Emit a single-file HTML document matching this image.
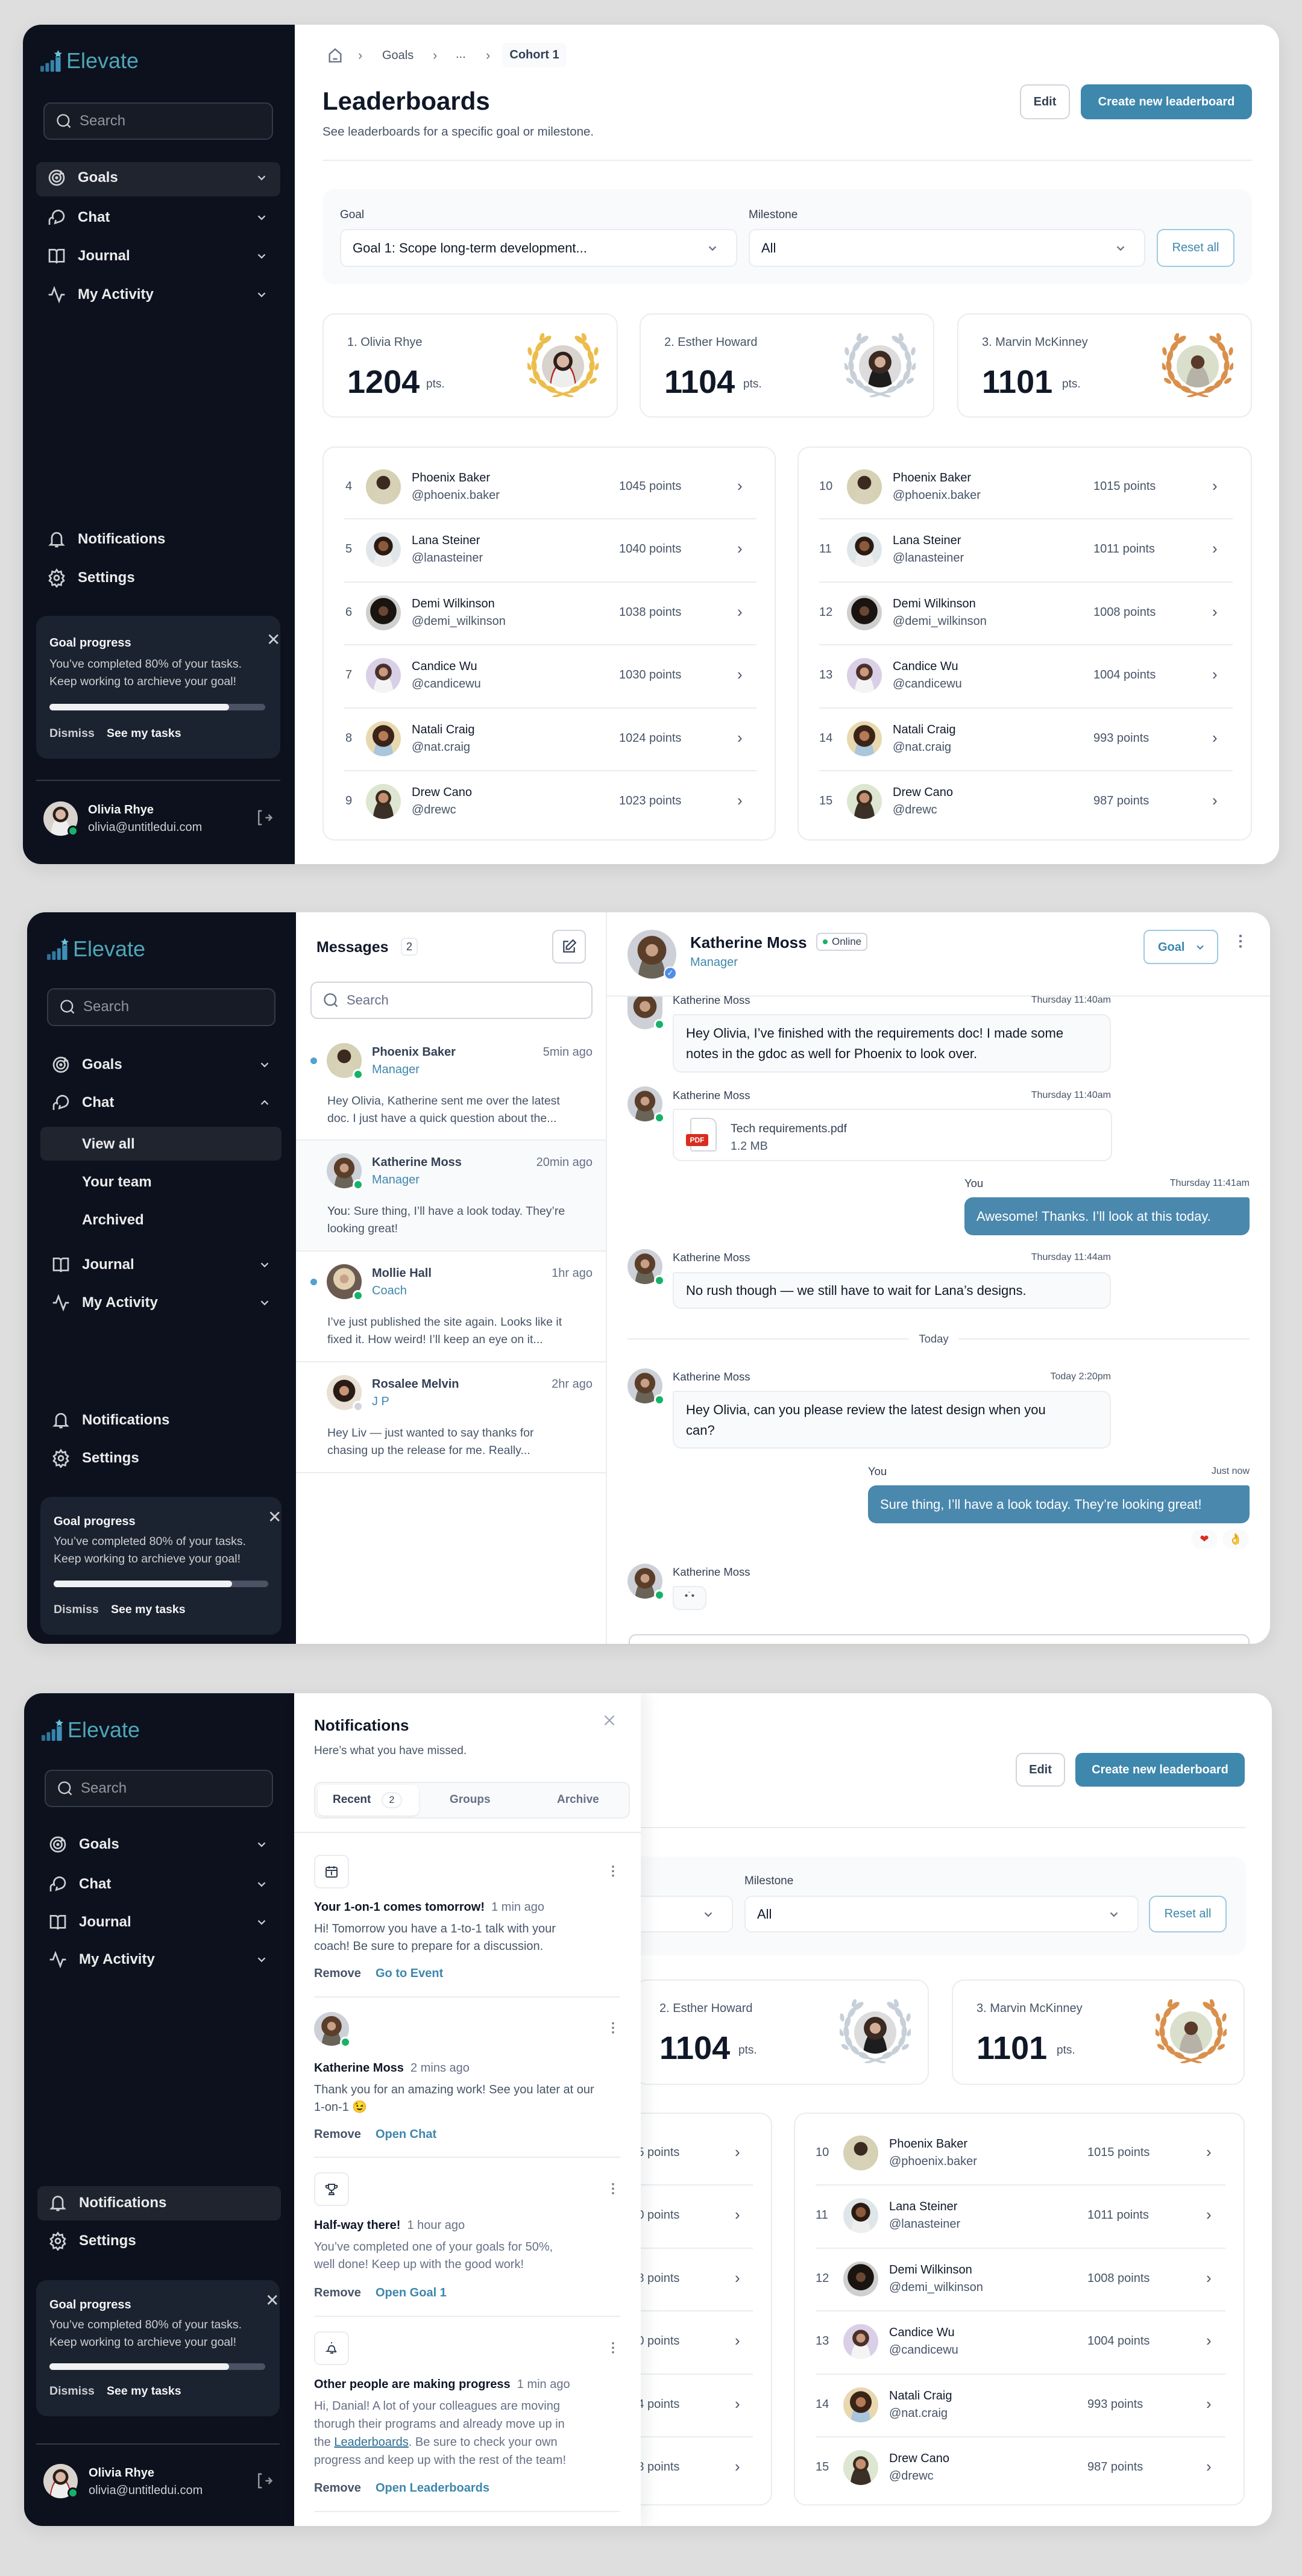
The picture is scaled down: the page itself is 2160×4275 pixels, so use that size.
<!DOCTYPE html>
<html><head><meta charset="utf-8">
<style>
*{box-sizing:border-box;margin:0;padding:0}
html,body{width:2160px;height:4275px;overflow:hidden}
body{background:#dedede;font-family:"Liberation Sans",sans-serif;color:#101828;position:relative}
.a{position:absolute}
.l{position:absolute;height:40px;line-height:40px;white-space:nowrap}
.p{position:absolute;background:#fff;border-radius:30px;overflow:hidden;box-shadow:0 8px 30px rgba(0,0,0,.08)}
.sb{position:absolute;left:0;top:0;bottom:0;background:#0c111d}
.nav{color:#ececed;font-size:24px;font-weight:700}
.ic{position:absolute;width:32px;height:32px}
.chev{position:absolute;width:22px;height:22px}
.srch{position:absolute;border:2px solid #333b4a;background:#161b26;border-radius:12px}
.srch span{position:absolute;left:58px;top:0;line-height:58px;font-size:24px;color:#94969c}
.gcard{position:absolute;background:#1b2230;border-radius:18px;width:405px}
.wbox{position:absolute;background:#fff;border:2px solid #eaecf0;border-radius:20px}
.btn{position:absolute;border-radius:12px;font-size:20px;font-weight:700;text-align:center}
.av{position:absolute;border-radius:50%;overflow:hidden}
.dot{position:absolute;width:18px;height:18px;border-radius:50%;background:#17b26a;border:3px solid #fff}
.g{color:#475467}
.lg{color:#667085}
.blue{color:#3e87ad}
.sep{position:absolute;height:2px;background:#eaecf0}
.bub{font-size:22px !important}
.nt{font-size:20px !important}
</style></head><body>
<svg width="0" height="0" style="position:absolute">
<defs>
<g id="half">
<ellipse cx="31" cy="11" rx="4.5" ry="10" transform="rotate(235 31 11)"/>
<ellipse cx="20" cy="22" rx="4.5" ry="10" transform="rotate(215 20 22)"/>
<ellipse cx="13" cy="38" rx="4.5" ry="10" transform="rotate(195 13 38)"/>
<ellipse cx="11" cy="54" rx="4.5" ry="10" transform="rotate(175 11 54)"/>
<ellipse cx="15" cy="70" rx="4.5" ry="10" transform="rotate(155 15 70)"/>
<ellipse cx="25" cy="84" rx="4.5" ry="10" transform="rotate(135 25 84)"/>
<ellipse cx="39" cy="93" rx="4.5" ry="10" transform="rotate(115 39 93)"/>
<ellipse cx="24" cy="6" rx="3.5" ry="7" transform="rotate(200 24 6)"/>
<ellipse cx="4" cy="30" rx="3.5" ry="7" transform="rotate(170 4 30)"/>
<ellipse cx="2" cy="55" rx="3.5" ry="7" transform="rotate(150 2 55)"/>
<ellipse cx="9" cy="79" rx="3.5" ry="7" transform="rotate(125 9 79)"/>
<path d="M40 95 L76 106" stroke-width="4" stroke="currentColor"/>
</g>
<g id="wreath"><use href="#half"/><use href="#half" transform="translate(118 0) scale(-1 1)"/></g>
<g id="logo"><rect x="0" y="22" width="5" height="8" rx="1" fill="#2f6f93"/><rect x="7" y="18" width="5" height="12" rx="1" fill="#2f7aa0"/><rect x="14" y="14" width="5" height="16" rx="1" fill="#3584ad"/><rect x="21" y="10" width="7" height="20" rx="1" fill="#3e8fba"/><path d="M24.5 0 L26.3 3.6 L30 4 L27.2 6.5 L28 10 L24.5 8.2 L21 10 L21.8 6.5 L19 4 L22.7 3.6Z" fill="#6cc4d8"/></g>
</defs></svg>

<!-- ================= PANEL 1 ================= -->
<div class="p" style="left:38px;top:41px;width:2084px;height:1393px">
 <div class="sb" style="width:451px">
  <svg class="a" style="left:29px;top:42px" width="36" height="36" viewBox="0 0 30 30"><use href="#logo"/></svg>
  <div class="l" style="left:72px;top:40px;font-size:36px;color:#4ea6b8">Elevate</div>
  <div class="srch" style="left:34px;top:129px;width:381px;height:62px"><svg class="a" style="left:18px;top:15px" width="28" height="28" viewBox="0 0 24 24" fill="none" stroke="#cecfd2" stroke-width="2"><circle cx="11" cy="11" r="8"/><path d="M21 21l-4.3-4.3"/></svg><span>Search</span></div>
  <div class="a" style="left:22px;top:228px;width:405px;height:57px;background:#1f242f;border-radius:10px"></div>
  <svg class="ic" style="left:40px;top:238px" viewBox="0 0 24 24" fill="none" stroke="#cecfd2" stroke-width="2"><circle cx="12" cy="12" r="9"/><circle cx="12" cy="12" r="5"/><circle cx="12" cy="12" r="1"/><path d="M15 9l4-4M17 3v4h4"/></svg>
  <div class="l nav" style="left:91px;top:234px">Goals</div>
  <svg class="ic" style="left:40px;top:304px" viewBox="0 0 24 24" fill="none" stroke="#cecfd2" stroke-width="2"><path d="M8 14a7 7 0 1 1 8 3l-6 2 1-4"/><path d="M3 21v-5a4 4 0 0 1 5-4"/></svg>
  <div class="l nav" style="left:91px;top:300px">Chat</div>
  <svg class="ic" style="left:40px;top:368px" viewBox="0 0 24 24" fill="none" stroke="#cecfd2" stroke-width="2"><path d="M3 4h6a3 3 0 0 1 3 3v14a2 2 0 0 0-2-2H3zM21 4h-6a3 3 0 0 0-3 3v14a2 2 0 0 1 2-2h7z"/></svg>
  <div class="l nav" style="left:91px;top:364px">Journal</div>
  <svg class="ic" style="left:40px;top:432px" viewBox="0 0 24 24" fill="none" stroke="#cecfd2" stroke-width="2"><path d="M2 12h4l3-8 6 16 3-8h4"/></svg>
  <div class="l nav" style="left:91px;top:428px">My Activity</div>
  <svg class="chev" style="left:385px;top:243px" viewBox="0 0 24 24" fill="none" stroke="#cecfd2" stroke-width="2.5"><path d="M6 9l6 6 6-6"/></svg>
  <svg class="chev" style="left:385px;top:309px" viewBox="0 0 24 24" fill="none" stroke="#cecfd2" stroke-width="2.5"><path d="M6 9l6 6 6-6"/></svg>
  <svg class="chev" style="left:385px;top:373px" viewBox="0 0 24 24" fill="none" stroke="#cecfd2" stroke-width="2.5"><path d="M6 9l6 6 6-6"/></svg>
  <svg class="chev" style="left:385px;top:437px" viewBox="0 0 24 24" fill="none" stroke="#cecfd2" stroke-width="2.5"><path d="M6 9l6 6 6-6"/></svg>
  <svg class="ic" style="left:40px;top:838px" viewBox="0 0 24 24" fill="none" stroke="#cecfd2" stroke-width="2"><path d="M6 17V10a6 6 0 0 1 12 0v7l2 2H4z"/><path d="M10 21h4"/></svg>
  <div class="l nav" style="left:91px;top:834px">Notifications</div>
  <svg class="ic" style="left:40px;top:902px" viewBox="0 0 24 24" fill="none" stroke="#cecfd2" stroke-width="2"><circle cx="12" cy="12" r="3"/><path d="M12 2l2 3 3.5-1 .5 3.5 3 2-2 3 2 3-3 2-.5 3.5-3.5-1-2 3-2-3-3.5 1-.5-3.5-3-2 2-3-2-3 3-2 .5-3.5 3.5 1z"/></svg>
  <div class="l nav" style="left:91px;top:898px">Settings</div>
  <div class="gcard" style="left:22px;top:981px;height:237px">
   <div class="l" style="left:22px;top:25px;font-size:20px;font-weight:700;color:#f5f5f6">Goal progress</div>
   <div class="l" style="left:382px;top:20px;font-size:28px;color:#cecfd2">✕</div>
   <div class="a" style="left:22px;top:66px;font-size:19.5px;line-height:29px;color:#cecfd2">You’ve completed 80% of your tasks.<br>Keep working to archieve your goal!</div>
   <div class="a" style="left:22px;top:146px;width:358px;height:11px;border-radius:6px;background:#4a5263"></div>
   <div class="a" style="left:22px;top:146px;width:298px;height:11px;border-radius:6px;background:#f0f1f3"></div>
   <div class="l" style="left:22px;top:175px;font-size:19.5px;font-weight:700;color:#cecfd2">Dismiss</div>
   <div class="l" style="left:117px;top:175px;font-size:19.5px;font-weight:700;color:#f5f5f6">See my tasks</div>
  </div>
  <div class="a" style="left:22px;top:1253px;width:405px;height:2px;background:#333a47"></div>
  <div class="av" style="left:34px;top:1289px;width:57px;height:57px;background:radial-gradient(circle at 50% 38%,#d9b7a2 0 18%,#2b1f1a 19% 28%,transparent 29%),radial-gradient(ellipse at 50% 105%,#eee 0 40%,transparent 41%),#d8d3cc"></div>
  <div class="dot" style="left:74px;top:1329px;border-color:#0c111d"></div>
  <div class="l" style="left:108px;top:1283px;font-size:20px;font-weight:700;color:#f5f5f6">Olivia Rhye</div>
  <div class="l" style="left:108px;top:1312px;font-size:20px;color:#cecfd2">olivia@untitledui.com</div>
  <svg class="a" style="left:385px;top:1301px" width="30" height="30" viewBox="0 0 24 24" fill="none" stroke="#94969c" stroke-width="2"><path d="M9 3H5v18h4M14 12h8M18 8l4 4-4 4"/></svg>
 </div>

 <!-- main -->
 <svg class="a" style="left:504px;top:37px" width="28" height="28" viewBox="0 0 24 24" fill="none" stroke="#667085" stroke-width="2"><path d="M4 10l8-7 8 7v11H4z"/><path d="M9 17h6"/></svg>
 <div class="l lg" style="left:556px;top:31px;font-size:22px">›</div>
 <div class="l g" style="left:596px;top:31px;font-size:20px">Goals</div>
 <div class="l lg" style="left:680px;top:31px;font-size:22px">›</div>
 <div class="l g" style="left:718px;top:29px;font-size:20px">...</div>
 <div class="l lg" style="left:768px;top:31px;font-size:22px">›</div>
 <div class="a" style="left:795px;top:30px;width:107px;height:41px;background:#f9fafb;border-radius:8px;font-size:20px;line-height:41px;text-align:center;color:#344054;font-weight:700">Cohort 1</div>
 <div class="l" style="left:497px;top:107px;font-size:42px;font-weight:700">Leaderboards</div>
 <div class="l g" style="left:497px;top:158px;font-size:20.5px">See leaderboards for a specific goal or milestone.</div>
 <div class="btn" style="left:1654px;top:99px;width:83px;height:58px;border:2px solid #d0d5dd;line-height:54px;color:#344054">Edit</div>
 <div class="btn" style="left:1755px;top:99px;width:284px;height:58px;background:#3e87ad;line-height:58px;color:#fff">Create new leaderboard</div>
 <div class="sep" style="left:497px;top:224px;width:1542px"></div>
 <div class="a" style="left:497px;top:273px;width:1542px;height:158px;background:#f9fafb;border-radius:20px"></div>
 <div class="l" style="left:526px;top:296px;font-size:19px;color:#344054">Goal</div>
 <div class="l" style="left:1204px;top:296px;font-size:19px;color:#344054">Milestone</div>
 <div class="wbox" style="left:526px;top:339px;width:659px;height:63px;border-radius:12px"><div class="l" style="left:19px;top:10px;font-size:22px">Goal 1: Scope long-term development...</div><svg class="chev" style="left:605px;top:19px" viewBox="0 0 24 24" fill="none" stroke="#667085" stroke-width="2.5"><path d="M6 9l6 6 6-6"/></svg></div>
 <div class="wbox" style="left:1204px;top:339px;width:658px;height:63px;border-radius:12px"><div class="l" style="left:19px;top:10px;font-size:22px">All</div><svg class="chev" style="left:604px;top:19px" viewBox="0 0 24 24" fill="none" stroke="#667085" stroke-width="2.5"><path d="M6 9l6 6 6-6"/></svg></div>
 <div class="btn" style="left:1881px;top:339px;width:129px;height:63px;border:2px solid #9ccae0;background:#fff;line-height:59px;color:#3e87ad;font-weight:400;font-size:20px">Reset all</div>

 <!-- top cards -->
 <div class="wbox" style="left:497px;top:479px;width:490px;height:173px">
  <div class="l g" style="left:39px;top:26px;font-size:20px">1. Olivia Rhye</div>
  <div class="l" style="left:39px;top:82px;font-size:54px;font-weight:700;height:60px;line-height:60px">1204</div>
  <div class="l g" style="left:170px;top:96px;font-size:19px">pts.</div>
  <svg class="a" style="left:338px;top:31px;color:#ecbd4c" width="118" height="106" viewBox="0 0 118 106" fill="#ecbd4c"><use href="#wreath"/></svg>
  <div class="av" style="left:362px;top:51px;width:70px;height:70px;background:radial-gradient(circle at 50% 38%,#d9b7a2 0 18%,#2b1f1a 19% 28%,transparent 29%),radial-gradient(ellipse at 50% 105%,#eee 0 40%,#b1221e 41% 44%,transparent 45%),#d8d3cc"></div>
 </div>
 <div class="wbox" style="left:1023px;top:479px;width:489px;height:173px">
  <div class="l g" style="left:39px;top:26px;font-size:20px">2. Esther Howard</div>
  <div class="l" style="left:39px;top:82px;font-size:54px;font-weight:700;height:60px;line-height:60px">1104</div>
  <div class="l g" style="left:170px;top:96px;font-size:19px">pts.</div>
  <svg class="a" style="left:338px;top:31px;color:#c7d0d8" width="118" height="106" viewBox="0 0 118 106" fill="#c7d0d8"><use href="#wreath"/></svg>
  <div class="av" style="left:362px;top:51px;width:70px;height:70px;background:radial-gradient(circle at 50% 40%,#d4ad96 0 16%,#3a2a22 17% 34%,transparent 35%),radial-gradient(ellipse at 50% 108%,#1d1d1d 0 40%,transparent 41%),#dcdcdc"></div>
 </div>
 <div class="wbox" style="left:1550px;top:479px;width:489px;height:173px">
  <div class="l g" style="left:39px;top:26px;font-size:20px">3. Marvin McKinney</div>
  <div class="l" style="left:39px;top:82px;font-size:54px;font-weight:700;height:60px;line-height:60px">1101</div>
  <div class="l g" style="left:172px;top:96px;font-size:19px">pts.</div>
  <svg class="a" style="left:338px;top:31px;color:#d9904c" width="118" height="106" viewBox="0 0 118 106" fill="#d9904c"><use href="#wreath"/></svg>
  <div class="av" style="left:362px;top:51px;width:70px;height:70px;background:radial-gradient(circle at 50% 40%,#5a3a2a 0 20%,transparent 21%),radial-gradient(ellipse at 50% 108%,#b6b2a8 0 40%,transparent 41%),#d9dfca"></div>
 </div>

 <!-- lists -->
 <div class="wbox" style="left:497px;top:700px;width:752px;height:654px">
  <div class="sep" style="left:34px;top:117px;width:684px"></div><div class="sep" style="left:34px;top:222px;width:684px"></div><div class="sep" style="left:34px;top:326px;width:684px"></div><div class="sep" style="left:34px;top:431px;width:684px"></div><div class="sep" style="left:34px;top:535px;width:684px"></div>
  <div class="l g" style="left:36px;top:44px;font-size:20px">4</div><div class="av" style="left:70px;top:36px;width:58px;height:58px;background:radial-gradient(circle at 50% 38%,#3b2a20 0 24%,transparent 25%),radial-gradient(ellipse at 50% 105%,#d8d2b8 0 42%,transparent 43%),#d6d0b4"></div><div class="l" style="left:146px;top:30px;font-size:20px">Phoenix Baker</div><div class="l g" style="left:146px;top:59px;font-size:20px">@phoenix.baker</div><div class="l g" style="left:490px;top:44px;font-size:20px">1045 points</div><div class="l g" style="left:686px;top:43px;font-size:26px">›</div>
  <div class="l g" style="left:36px;top:148px;font-size:20px">5</div><div class="av" style="left:70px;top:140px;width:58px;height:58px;background:radial-gradient(circle at 50% 40%,#8b5a3c 0 18%,#2a1a12 19% 34%,transparent 35%),radial-gradient(ellipse at 50% 108%,#eee 0 40%,transparent 41%),#dfe6ea"></div><div class="l" style="left:146px;top:134px;font-size:20px">Lana Steiner</div><div class="l g" style="left:146px;top:163px;font-size:20px">@lanasteiner</div><div class="l g" style="left:490px;top:148px;font-size:20px">1040 points</div><div class="l g" style="left:686px;top:147px;font-size:26px">›</div>
  <div class="l g" style="left:36px;top:253px;font-size:20px">6</div><div class="av" style="left:70px;top:245px;width:58px;height:58px;background:radial-gradient(circle at 50% 45%,#6b4634 0 18%,#1a1410 19% 50%,transparent 51%),#cfcfcf"></div><div class="l" style="left:146px;top:239px;font-size:20px">Demi Wilkinson</div><div class="l g" style="left:146px;top:268px;font-size:20px">@demi_wilkinson</div><div class="l g" style="left:490px;top:253px;font-size:20px">1038 points</div><div class="l g" style="left:686px;top:252px;font-size:26px">›</div>
  <div class="l g" style="left:36px;top:357px;font-size:20px">7</div><div class="av" style="left:70px;top:349px;width:58px;height:58px;background:radial-gradient(circle at 50% 40%,#c99a80 0 16%,#4a3028 17% 30%,transparent 31%),radial-gradient(ellipse at 50% 108%,#f4f4f4 0 40%,transparent 41%),#d9cfe6"></div><div class="l" style="left:146px;top:343px;font-size:20px">Candice Wu</div><div class="l g" style="left:146px;top:372px;font-size:20px">@candicewu</div><div class="l g" style="left:490px;top:357px;font-size:20px">1030 points</div><div class="l g" style="left:686px;top:356px;font-size:26px">›</div>
  <div class="l g" style="left:36px;top:462px;font-size:20px">8</div><div class="av" style="left:70px;top:454px;width:58px;height:58px;background:radial-gradient(circle at 50% 42%,#b57a56 0 18%,#3a2418 19% 40%,transparent 41%),radial-gradient(ellipse at 50% 108%,#a9c6dc 0 40%,transparent 41%),#e8d8b0"></div><div class="l" style="left:146px;top:448px;font-size:20px">Natali Craig</div><div class="l g" style="left:146px;top:477px;font-size:20px">@nat.craig</div><div class="l g" style="left:490px;top:462px;font-size:20px">1024 points</div><div class="l g" style="left:686px;top:461px;font-size:26px">›</div>
  <div class="l g" style="left:36px;top:566px;font-size:20px">9</div><div class="av" style="left:70px;top:558px;width:58px;height:58px;background:radial-gradient(circle at 50% 40%,#c49070 0 18%,#3a2a20 19% 28%,transparent 29%),radial-gradient(ellipse at 50% 108%,#3a3028 0 42%,transparent 43%),#dce6d0"></div><div class="l" style="left:146px;top:552px;font-size:20px">Drew Cano</div><div class="l g" style="left:146px;top:581px;font-size:20px">@drewc</div><div class="l g" style="left:490px;top:566px;font-size:20px">1023 points</div><div class="l g" style="left:686px;top:565px;font-size:26px">›</div>
 </div>
 <div class="wbox" style="left:1285px;top:700px;width:754px;height:654px">
  <div class="sep" style="left:34px;top:117px;width:686px"></div><div class="sep" style="left:34px;top:222px;width:686px"></div><div class="sep" style="left:34px;top:326px;width:686px"></div><div class="sep" style="left:34px;top:431px;width:686px"></div><div class="sep" style="left:34px;top:535px;width:686px"></div>
  <div class="l g" style="left:34px;top:44px;font-size:20px">10</div><div class="av" style="left:80px;top:36px;width:58px;height:58px;background:radial-gradient(circle at 50% 38%,#3b2a20 0 24%,transparent 25%),radial-gradient(ellipse at 50% 105%,#d8d2b8 0 42%,transparent 43%),#d6d0b4"></div><div class="l" style="left:156px;top:30px;font-size:20px">Phoenix Baker</div><div class="l g" style="left:156px;top:59px;font-size:20px">@phoenix.baker</div><div class="l g" style="left:489px;top:44px;font-size:20px">1015 points</div><div class="l g" style="left:686px;top:43px;font-size:26px">›</div>
  <div class="l g" style="left:34px;top:148px;font-size:20px">11</div><div class="av" style="left:80px;top:140px;width:58px;height:58px;background:radial-gradient(circle at 50% 40%,#8b5a3c 0 18%,#2a1a12 19% 34%,transparent 35%),radial-gradient(ellipse at 50% 108%,#eee 0 40%,transparent 41%),#dfe6ea"></div><div class="l" style="left:156px;top:134px;font-size:20px">Lana Steiner</div><div class="l g" style="left:156px;top:163px;font-size:20px">@lanasteiner</div><div class="l g" style="left:489px;top:148px;font-size:20px">1011 points</div><div class="l g" style="left:686px;top:147px;font-size:26px">›</div>
  <div class="l g" style="left:34px;top:253px;font-size:20px">12</div><div class="av" style="left:80px;top:245px;width:58px;height:58px;background:radial-gradient(circle at 50% 45%,#6b4634 0 18%,#1a1410 19% 50%,transparent 51%),#cfcfcf"></div><div class="l" style="left:156px;top:239px;font-size:20px">Demi Wilkinson</div><div class="l g" style="left:156px;top:268px;font-size:20px">@demi_wilkinson</div><div class="l g" style="left:489px;top:253px;font-size:20px">1008 points</div><div class="l g" style="left:686px;top:252px;font-size:26px">›</div>
  <div class="l g" style="left:34px;top:357px;font-size:20px">13</div><div class="av" style="left:80px;top:349px;width:58px;height:58px;background:radial-gradient(circle at 50% 40%,#c99a80 0 16%,#4a3028 17% 30%,transparent 31%),radial-gradient(ellipse at 50% 108%,#f4f4f4 0 40%,transparent 41%),#d9cfe6"></div><div class="l" style="left:156px;top:343px;font-size:20px">Candice Wu</div><div class="l g" style="left:156px;top:372px;font-size:20px">@candicewu</div><div class="l g" style="left:489px;top:357px;font-size:20px">1004 points</div><div class="l g" style="left:686px;top:356px;font-size:26px">›</div>
  <div class="l g" style="left:34px;top:462px;font-size:20px">14</div><div class="av" style="left:80px;top:454px;width:58px;height:58px;background:radial-gradient(circle at 50% 42%,#b57a56 0 18%,#3a2418 19% 40%,transparent 41%),radial-gradient(ellipse at 50% 108%,#a9c6dc 0 40%,transparent 41%),#e8d8b0"></div><div class="l" style="left:156px;top:448px;font-size:20px">Natali Craig</div><div class="l g" style="left:156px;top:477px;font-size:20px">@nat.craig</div><div class="l g" style="left:489px;top:462px;font-size:20px">993 points</div><div class="l g" style="left:686px;top:461px;font-size:26px">›</div>
  <div class="l g" style="left:34px;top:566px;font-size:20px">15</div><div class="av" style="left:80px;top:558px;width:58px;height:58px;background:radial-gradient(circle at 50% 40%,#c49070 0 18%,#3a2a20 19% 28%,transparent 29%),radial-gradient(ellipse at 50% 108%,#3a3028 0 42%,transparent 43%),#dce6d0"></div><div class="l" style="left:156px;top:552px;font-size:20px">Drew Cano</div><div class="l g" style="left:156px;top:581px;font-size:20px">@drewc</div><div class="l g" style="left:489px;top:566px;font-size:20px">987 points</div><div class="l g" style="left:686px;top:565px;font-size:26px">›</div>
 </div>
</div>

<!-- ================= PANEL 2 ================= -->
<div class="p" style="left:45px;top:1514px;width:2062px;height:1214px">
 <div class="sb" style="width:446px">
  <svg class="a" style="left:33px;top:43px" width="36" height="36" viewBox="0 0 30 30"><use href="#logo"/></svg>
  <div class="l" style="left:76px;top:41px;font-size:36px;color:#4ea6b8">Elevate</div>
  <div class="srch" style="left:33px;top:126px;width:379px;height:63px"><svg class="a" style="left:18px;top:15px" width="28" height="28" viewBox="0 0 24 24" fill="none" stroke="#cecfd2" stroke-width="2"><circle cx="11" cy="11" r="8"/><path d="M21 21l-4.3-4.3"/></svg><span>Search</span></div>
  <svg class="ic" style="left:40px;top:237px" viewBox="0 0 24 24" fill="none" stroke="#cecfd2" stroke-width="2"><circle cx="12" cy="12" r="9"/><circle cx="12" cy="12" r="5"/><circle cx="12" cy="12" r="1"/><path d="M15 9l4-4M17 3v4h4"/></svg>
  <div class="l nav" style="left:91px;top:233px">Goals</div>
  <svg class="ic" style="left:40px;top:300px" viewBox="0 0 24 24" fill="none" stroke="#cecfd2" stroke-width="2"><path d="M8 14a7 7 0 1 1 8 3l-6 2 1-4"/><path d="M3 21v-5a4 4 0 0 1 5-4"/></svg>
  <div class="l nav" style="left:91px;top:296px">Chat</div>
  <div class="a" style="left:22px;top:356px;width:400px;height:56px;background:#1f242f;border-radius:10px"></div>
  <div class="l nav" style="left:91px;top:365px">View all</div>
  <div class="l nav" style="left:91px;top:428px">Your team</div>
  <div class="l nav" style="left:91px;top:491px">Archived</div>
  <svg class="ic" style="left:40px;top:569px" viewBox="0 0 24 24" fill="none" stroke="#cecfd2" stroke-width="2"><path d="M3 4h6a3 3 0 0 1 3 3v14a2 2 0 0 0-2-2H3zM21 4h-6a3 3 0 0 0-3 3v14a2 2 0 0 1 2-2h7z"/></svg>
  <div class="l nav" style="left:91px;top:565px">Journal</div>
  <svg class="ic" style="left:40px;top:632px" viewBox="0 0 24 24" fill="none" stroke="#cecfd2" stroke-width="2"><path d="M2 12h4l3-8 6 16 3-8h4"/></svg>
  <div class="l nav" style="left:91px;top:628px">My Activity</div>
  <svg class="chev" style="left:383px;top:242px" viewBox="0 0 24 24" fill="none" stroke="#cecfd2" stroke-width="2.5"><path d="M6 9l6 6 6-6"/></svg>
  <svg class="chev" style="left:383px;top:305px" viewBox="0 0 24 24" fill="none" stroke="#cecfd2" stroke-width="2.5"><path d="M6 15l6-6 6 6"/></svg>
  <svg class="chev" style="left:383px;top:574px" viewBox="0 0 24 24" fill="none" stroke="#cecfd2" stroke-width="2.5"><path d="M6 9l6 6 6-6"/></svg>
  <svg class="chev" style="left:383px;top:637px" viewBox="0 0 24 24" fill="none" stroke="#cecfd2" stroke-width="2.5"><path d="M6 9l6 6 6-6"/></svg>
  <svg class="ic" style="left:40px;top:827px" viewBox="0 0 24 24" fill="none" stroke="#cecfd2" stroke-width="2"><path d="M6 17V10a6 6 0 0 1 12 0v7l2 2H4z"/><path d="M10 21h4"/></svg>
  <div class="l nav" style="left:91px;top:823px">Notifications</div>
  <svg class="ic" style="left:40px;top:890px" viewBox="0 0 24 24" fill="none" stroke="#cecfd2" stroke-width="2"><circle cx="12" cy="12" r="3"/><path d="M12 2l2 3 3.5-1 .5 3.5 3 2-2 3 2 3-3 2-.5 3.5-3.5-1-2 3-2-3-3.5 1-.5-3.5-3-2 2-3-2-3 3-2 .5-3.5 3.5 1z"/></svg>
  <div class="l nav" style="left:91px;top:886px">Settings</div>
  <div class="gcard" style="left:22px;top:970px;height:229px;width:400px">
   <div class="l" style="left:22px;top:21px;font-size:20px;font-weight:700;color:#f5f5f6">Goal progress</div>
   <div class="l" style="left:377px;top:14px;font-size:28px;color:#cecfd2">✕</div>
   <div class="a" style="left:22px;top:60px;font-size:19.5px;line-height:29px;color:#cecfd2">You’ve completed 80% of your tasks.<br>Keep working to archieve your goal!</div>
   <div class="a" style="left:22px;top:139px;width:356px;height:11px;border-radius:6px;background:#4a5263"></div>
   <div class="a" style="left:22px;top:139px;width:296px;height:11px;border-radius:6px;background:#f0f1f3"></div>
   <div class="l" style="left:22px;top:167px;font-size:19.5px;font-weight:700;color:#cecfd2">Dismiss</div>
   <div class="l" style="left:117px;top:167px;font-size:19.5px;font-weight:700;color:#f5f5f6">See my tasks</div>
  </div>
 </div>
 <!-- messages list -->
 <div class="a" style="left:960px;top:0;width:2px;height:1214px;background:#eaecf0"></div>
 <div class="l" style="left:480px;top:38px;font-size:25px;font-weight:700">Messages</div>
 <div class="a" style="left:620px;top:42px;width:28px;height:30px;border:2px solid #eaecf0;border-radius:7px;font-size:18px;line-height:26px;text-align:center;color:#344054">2</div>
 <div class="a" style="left:871px;top:29px;width:56px;height:56px;border:2px solid #d0d5dd;border-radius:10px"><svg class="a" style="left:13px;top:13px" width="26" height="26" viewBox="0 0 24 24" fill="none" stroke="#344054" stroke-width="2"><path d="M11 4H4v16h16v-7"/><path d="M18 2l4 4-10 10H8v-4z"/></svg></div>
 <div class="wbox" style="left:470px;top:115px;width:468px;height:62px;border-radius:12px;border-color:#d0d5dd"><svg class="a" style="left:18px;top:15px" width="28" height="28" viewBox="0 0 24 24" fill="none" stroke="#667085" stroke-width="2"><circle cx="11" cy="11" r="8"/><path d="M21 21l-4.3-4.3"/></svg><div class="l lg" style="left:58px;top:9px;font-size:22px">Search</div></div>
 <div class="a" style="left:446px;top:377px;width:514px;height:184px;background:#f9fafb"></div>
 <div class="sep" style="left:446px;top:377px;width:514px"></div><div class="sep" style="left:446px;top:561px;width:514px"></div><div class="sep" style="left:446px;top:745px;width:514px"></div><div class="sep" style="left:446px;top:929px;width:514px"></div>
 <!-- item1 -->
 <div class="a" style="left:470px;top:241px;width:11px;height:11px;border-radius:50%;background:#53a1cf"></div>
 <div class="av" style="left:497px;top:217px;width:58px;height:58px;background:radial-gradient(circle at 50% 38%,#3b2a20 0 24%,transparent 25%),radial-gradient(ellipse at 50% 105%,#d8d2b8 0 42%,transparent 43%),#d6d0b4"></div><div class="dot" style="left:540px;top:260px"></div>
 <div class="l" style="left:572px;top:212px;font-size:20px;font-weight:700;color:#344054">Phoenix Baker</div>
 <div class="l lg" style="left:820px;top:212px;width:118px;text-align:right;font-size:20px">5min ago</div>
 <div class="l blue" style="left:572px;top:241px;font-size:20px">Manager</div>
 <div class="a g" style="left:498px;top:299px;font-size:19.5px;line-height:29px">Hey Olivia, Katherine sent me over the latest<br>doc. I just have a quick question about the...</div>
 <!-- item2 -->
 <div class="av" style="left:497px;top:400px;width:58px;height:58px;background:radial-gradient(circle at 50% 42%,#c8a088 0 16%,#5a3e2a 17% 38%,transparent 39%),radial-gradient(ellipse at 50% 108%,#6a6458 0 40%,transparent 41%),#cdd0d6"></div><div class="dot" style="left:540px;top:443px"></div>
 <div class="l" style="left:572px;top:395px;font-size:20px;font-weight:700;color:#344054">Katherine Moss</div>
 <div class="l lg" style="left:820px;top:395px;width:118px;text-align:right;font-size:20px">20min ago</div>
 <div class="l blue" style="left:572px;top:424px;font-size:20px">Manager</div>
 <div class="a g" style="left:498px;top:482px;font-size:19.5px;line-height:29px"><span style="color:#344054">You:</span> Sure thing, I’ll have a look today. They’re<br>looking great!</div>
 <!-- item3 -->
 <div class="a" style="left:470px;top:608px;width:11px;height:11px;border-radius:50%;background:#53a1cf"></div>
 <div class="av" style="left:497px;top:584px;width:58px;height:58px;background:radial-gradient(circle at 50% 42%,#caa08a 0 16%,#e0d0b0 17% 40%,transparent 41%),#6a5a50"></div><div class="dot" style="left:540px;top:627px"></div>
 <div class="l" style="left:572px;top:579px;font-size:20px;font-weight:700;color:#344054">Mollie Hall</div>
 <div class="l lg" style="left:820px;top:579px;width:118px;text-align:right;font-size:20px">1hr ago</div>
 <div class="l blue" style="left:572px;top:608px;font-size:20px">Coach</div>
 <div class="a g" style="left:498px;top:666px;font-size:19.5px;line-height:29px">I’ve just published the site again. Looks like it<br>fixed it. How weird! I’ll keep an eye on it...</div>
 <!-- item4 -->
 <div class="av" style="left:497px;top:768px;width:58px;height:58px;background:radial-gradient(circle at 50% 45%,#c89478 0 18%,#2a1c14 19% 42%,transparent 43%),#e8e0d4"></div><div class="dot" style="left:540px;top:811px;background:#d0d5dd"></div>
 <div class="l" style="left:572px;top:763px;font-size:20px;font-weight:700;color:#344054">Rosalee Melvin</div>
 <div class="l lg" style="left:820px;top:763px;width:118px;text-align:right;font-size:20px">2hr ago</div>
 <div class="l blue" style="left:572px;top:792px;font-size:20px">J P</div>
 <div class="a g" style="left:498px;top:850px;font-size:19.5px;line-height:29px">Hey Liv — just wanted to say thanks for<br>chasing up the release for me. Really...</div>

 <!-- chat -->
 <div class="av" style="left:996px;top:29px;width:81px;height:81px;background:radial-gradient(circle at 50% 42%,#c8a088 0 16%,#5a3e2a 17% 38%,transparent 39%),radial-gradient(ellipse at 50% 108%,#6a6458 0 40%,transparent 41%),#cdd0d6"></div>
 <div class="a" style="left:1056px;top:90px;width:22px;height:22px;border-radius:50%;background:#4f8de8;border:2px solid #fff;color:#fff;font-size:13px;line-height:18px;text-align:center">✓</div>
 <div class="l" style="left:1100px;top:30px;font-size:26px;font-weight:700">Katherine Moss</div>
 <div class="a" style="left:1309px;top:34px;width:85px;height:30px;border:2px solid #d0d5dd;border-radius:7px;font-size:17px;line-height:26px;color:#344054;padding-left:24px">Online<span class="a" style="left:9px;top:9px;width:8px;height:8px;border-radius:50%;background:#17b26a"></span></div>
 <div class="l blue" style="left:1100px;top:63px;font-size:20px">Manager</div>
 <div class="a" style="left:1852px;top:29px;width:124px;height:57px;border:2px solid #9ccae0;border-radius:10px"><div class="l blue" style="left:22px;top:7px;font-size:20px;font-weight:700">Goal</div><svg class="a" style="left:82px;top:17px" width="20" height="20" viewBox="0 0 24 24" fill="none" stroke="#3e87ad" stroke-width="2.5"><path d="M6 9l6 6 6-6"/></svg></div>
 <div class="l lg" style="left:2006px;top:35px;font-size:26px;font-weight:700;writing-mode:vertical-lr;height:auto;line-height:16px">⋯</div>
 <div class="sep" style="left:962px;top:138px;width:1100px"></div>
 <!-- msg1 -->
 <div class="av" style="left:996px;top:140px;width:58px;height:54px;border-radius:0 0 29px 29px;background:radial-gradient(circle at 50% 30%,#c8a088 0 18%,#5a3e2a 19% 40%,transparent 41%),#cdd0d6"></div><div class="dot" style="left:1040px;top:177px"></div>
 <div class="l" style="left:1071px;top:126px;font-size:18.5px;color:#344054">Katherine Moss</div>
 <div class="l g" style="left:1600px;top:126px;width:198px;text-align:right;font-size:16px">Thursday 11:40am</div>
 <div class="a bub" style="left:1071px;top:169px;width:727px;height:97px;background:#f9fafb;border:2px solid #eaecf0;border-radius:4px 14px 14px 14px;padding:13px 20px;line-height:34px">Hey Olivia, I’ve finished with the requirements doc! I made some notes in the gdoc as well for Phoenix to look over.</div>
 <!-- msg2 -->
 <div class="av" style="left:996px;top:289px;width:58px;height:58px;background:radial-gradient(circle at 50% 42%,#c8a088 0 16%,#5a3e2a 17% 38%,transparent 39%),radial-gradient(ellipse at 50% 108%,#6a6458 0 40%,transparent 41%),#cdd0d6"></div><div class="dot" style="left:1040px;top:332px"></div>
 <div class="l" style="left:1071px;top:284px;font-size:18.5px;color:#344054">Katherine Moss</div>
 <div class="l g" style="left:1600px;top:284px;width:198px;text-align:right;font-size:16px">Thursday 11:40am</div>
 <div class="a" style="left:1071px;top:326px;width:729px;height:87px;background:#fff;border:2px solid #eaecf0;border-radius:4px 14px 14px 14px">
  <div class="a" style="left:27px;top:13px;width:44px;height:56px;border:2px solid #d0d5dd;border-radius:4px 12px 4px 4px;background:#fff"></div>
  <div class="a" style="left:20px;top:40px;width:37px;height:20px;background:#d92d20;border-radius:3px;color:#fff;font-size:12px;font-weight:700;line-height:20px;text-align:center">PDF</div>
  <div class="l" style="left:94px;top:11px;font-size:19.5px;color:#344054">Tech requirements.pdf</div>
  <div class="l g" style="left:94px;top:40px;font-size:19.5px">1.2 MB</div>
 </div>
 <!-- you1 -->
 <div class="l" style="left:1555px;top:430px;font-size:18.5px;color:#344054">You</div>
 <div class="l g" style="left:1830px;top:430px;width:198px;text-align:right;font-size:16px">Thursday 11:41am</div>
 <div class="a bub" style="left:1555px;top:473px;width:473px;height:63px;background:#4a88ad;border-radius:14px 4px 14px 14px;color:#fff;line-height:63px;padding-left:20px;white-space:nowrap">Awesome! Thanks. I’ll look at this today.</div>
 <!-- msg3 -->
 <div class="av" style="left:996px;top:559px;width:58px;height:58px;background:radial-gradient(circle at 50% 42%,#c8a088 0 16%,#5a3e2a 17% 38%,transparent 39%),radial-gradient(ellipse at 50% 108%,#6a6458 0 40%,transparent 41%),#cdd0d6"></div><div class="dot" style="left:1040px;top:602px"></div>
 <div class="l" style="left:1071px;top:553px;font-size:18.5px;color:#344054">Katherine Moss</div>
 <div class="l g" style="left:1600px;top:553px;width:198px;text-align:right;font-size:16px">Thursday 11:44am</div>
 <div class="a bub" style="left:1071px;top:597px;width:727px;height:61px;background:#f9fafb;border:2px solid #eaecf0;border-radius:4px 14px 14px 14px;padding-left:20px;line-height:57px">No rush though — we still have to wait for Lana’s designs.</div>
 <!-- today -->
 <div class="sep" style="left:996px;top:707px;width:1032px"></div>
 <div class="l" style="left:1463px;top:688px;width:82px;text-align:center;background:#fff;font-size:18.5px;color:#475467">Today</div>
 <!-- msg4 -->
 <div class="av" style="left:996px;top:757px;width:58px;height:58px;background:radial-gradient(circle at 50% 42%,#c8a088 0 16%,#5a3e2a 17% 38%,transparent 39%),radial-gradient(ellipse at 50% 108%,#6a6458 0 40%,transparent 41%),#cdd0d6"></div><div class="dot" style="left:1040px;top:800px"></div>
 <div class="l" style="left:1071px;top:751px;font-size:18.5px;color:#344054">Katherine Moss</div>
 <div class="l g" style="left:1600px;top:751px;width:198px;text-align:right;font-size:16px">Today 2:20pm</div>
 <div class="a bub" style="left:1071px;top:794px;width:727px;height:96px;background:#f9fafb;border:2px solid #eaecf0;border-radius:4px 14px 14px 14px;padding:13px 20px;line-height:34px">Hey Olivia, can you please review the latest design when you<br>can?</div>
 <!-- you2 -->
 <div class="l" style="left:1395px;top:908px;font-size:18.5px;color:#344054">You</div>
 <div class="l g" style="left:1830px;top:908px;width:198px;text-align:right;font-size:16px">Just now</div>
 <div class="a bub" style="left:1395px;top:951px;width:633px;height:63px;background:#4a88ad;border-radius:14px 4px 14px 14px;color:#fff;line-height:63px;padding-left:20px;white-space:nowrap">Sure thing, I’ll have a look today. They’re looking great!</div>
 <div class="a" style="left:1931px;top:1024px;width:44px;height:32px;border-radius:16px;background:#f9fafb;text-align:center;font-size:18px;line-height:32px;color:#d92d20">❤</div>
 <div class="a" style="left:1983px;top:1024px;width:44px;height:32px;border-radius:16px;background:#f9fafb;text-align:center;font-size:18px;line-height:32px;color:#e8a33c">👌</div>
 <!-- msg5 -->
 <div class="av" style="left:996px;top:1081px;width:58px;height:58px;background:radial-gradient(circle at 50% 42%,#c8a088 0 16%,#5a3e2a 17% 38%,transparent 39%),radial-gradient(ellipse at 50% 108%,#6a6458 0 40%,transparent 41%),#cdd0d6"></div><div class="dot" style="left:1040px;top:1124px"></div>
 <div class="l" style="left:1071px;top:1075px;font-size:18.5px;color:#344054">Katherine Moss</div>
 <div class="a" style="left:1071px;top:1118px;width:56px;height:40px;background:#f9fafb;border:2px solid #eaecf0;border-radius:4px 12px 12px 12px;font-size:16px;text-align:center;line-height:30px;color:#475467">•˙•</div>
 <div class="a" style="left:998px;top:1198px;width:1030px;height:60px;border:2px solid #d0d5dd;border-radius:12px"></div>
</div>

<!-- ================= PANEL 3 ================= -->
<div class="p" style="left:40px;top:2810px;width:2070px;height:1382px">
 <div class="btn" style="left:1645px;top:99px;width:82px;height:56px;border:2px solid #d0d5dd;line-height:52px;color:#344054">Edit</div>
 <div class="btn" style="left:1744px;top:99px;width:281px;height:56px;background:#3e87ad;line-height:56px;color:#fff">Create new leaderboard</div>
 <div class="l g" style="left:1010px;top:156px;font-size:20px">.</div>
 <div class="sep" style="left:497px;top:222px;width:1530px"></div>
 <div class="a" style="left:497px;top:271px;width:1530px;height:164px;background:#f9fafb;border-radius:20px"></div>
 <div class="l" style="left:1195px;top:292px;font-size:19px;color:#344054">Milestone</div>
 <div class="wbox" style="left:520px;top:336px;width:656px;height:61px;border-radius:12px"><svg class="chev" style="left:602px;top:18px" viewBox="0 0 24 24" fill="none" stroke="#667085" stroke-width="2.5"><path d="M6 9l6 6 6-6"/></svg></div>
 <div class="wbox" style="left:1195px;top:336px;width:654px;height:61px;border-radius:12px"><div class="l" style="left:19px;top:9px;font-size:22px">All</div><svg class="chev" style="left:600px;top:18px" viewBox="0 0 24 24" fill="none" stroke="#667085" stroke-width="2.5"><path d="M6 9l6 6 6-6"/></svg></div>
 <div class="btn" style="left:1866px;top:336px;width:129px;height:61px;border:2px solid #9ccae0;background:#fff;line-height:57px;color:#3e87ad;font-weight:400;font-size:20px">Reset all</div>
 <div class="wbox" style="left:1013px;top:475px;width:488px;height:175px">
  <div class="l g" style="left:39px;top:26px;font-size:20px">2. Esther Howard</div>
  <div class="l" style="left:39px;top:82px;font-size:54px;font-weight:700;height:60px;line-height:60px">1104</div>
  <div class="l g" style="left:170px;top:96px;font-size:19px">pts.</div>
  <svg class="a" style="left:338px;top:31px" width="118" height="106" viewBox="0 0 118 106" fill="#c7d0d8" color="#c7d0d8"><use href="#wreath"/></svg>
  <div class="av" style="left:362px;top:51px;width:70px;height:70px;background:radial-gradient(circle at 50% 40%,#d4ad96 0 16%,#3a2a22 17% 34%,transparent 35%),radial-gradient(ellipse at 50% 108%,#1d1d1d 0 40%,transparent 41%),#dcdcdc"></div>
 </div>
 <div class="wbox" style="left:1539px;top:475px;width:486px;height:175px">
  <div class="l g" style="left:39px;top:26px;font-size:20px">3. Marvin McKinney</div>
  <div class="l" style="left:39px;top:82px;font-size:54px;font-weight:700;height:60px;line-height:60px">1101</div>
  <div class="l g" style="left:172px;top:96px;font-size:19px">pts.</div>
  <svg class="a" style="left:336px;top:31px" width="118" height="106" viewBox="0 0 118 106" fill="#d9904c" color="#d9904c"><use href="#wreath"/></svg>
  <div class="av" style="left:360px;top:51px;width:70px;height:70px;background:radial-gradient(circle at 50% 40%,#5a3a2a 0 20%,transparent 21%),radial-gradient(ellipse at 50% 108%,#b6b2a8 0 40%,transparent 41%),#d9dfca"></div>
 </div>
 <div class="wbox" style="left:497px;top:696px;width:744px;height:652px">
  <div class="sep" style="left:34px;top:117px;width:676px"></div><div class="sep" style="left:34px;top:222px;width:676px"></div><div class="sep" style="left:34px;top:326px;width:676px"></div><div class="sep" style="left:34px;top:431px;width:676px"></div><div class="sep" style="left:34px;top:535px;width:676px"></div>
  <div class="l g" style="left:485px;top:44px;font-size:20px">1045 points</div><div class="l g" style="left:680px;top:43px;font-size:26px">›</div>
  <div class="l g" style="left:485px;top:148px;font-size:20px">1040 points</div><div class="l g" style="left:680px;top:147px;font-size:26px">›</div>
  <div class="l g" style="left:485px;top:253px;font-size:20px">1038 points</div><div class="l g" style="left:680px;top:252px;font-size:26px">›</div>
  <div class="l g" style="left:485px;top:357px;font-size:20px">1030 points</div><div class="l g" style="left:680px;top:356px;font-size:26px">›</div>
  <div class="l g" style="left:485px;top:462px;font-size:20px">1024 points</div><div class="l g" style="left:680px;top:461px;font-size:26px">›</div>
  <div class="l g" style="left:485px;top:566px;font-size:20px">1023 points</div><div class="l g" style="left:680px;top:565px;font-size:26px">›</div>
 </div>
 <div class="wbox" style="left:1277px;top:696px;width:748px;height:652px">
  <div class="sep" style="left:34px;top:117px;width:680px"></div><div class="sep" style="left:34px;top:222px;width:680px"></div><div class="sep" style="left:34px;top:326px;width:680px"></div><div class="sep" style="left:34px;top:431px;width:680px"></div><div class="sep" style="left:34px;top:535px;width:680px"></div>
  <div class="l g" style="left:34px;top:44px;font-size:20px">10</div><div class="av" style="left:80px;top:36px;width:58px;height:58px;background:radial-gradient(circle at 50% 38%,#3b2a20 0 24%,transparent 25%),radial-gradient(ellipse at 50% 105%,#d8d2b8 0 42%,transparent 43%),#d6d0b4"></div><div class="l" style="left:156px;top:30px;font-size:20px">Phoenix Baker</div><div class="l g" style="left:156px;top:59px;font-size:20px">@phoenix.baker</div><div class="l g" style="left:485px;top:44px;font-size:20px">1015 points</div><div class="l g" style="left:682px;top:43px;font-size:26px">›</div>
  <div class="l g" style="left:34px;top:148px;font-size:20px">11</div><div class="av" style="left:80px;top:140px;width:58px;height:58px;background:radial-gradient(circle at 50% 40%,#8b5a3c 0 18%,#2a1a12 19% 34%,transparent 35%),radial-gradient(ellipse at 50% 108%,#eee 0 40%,transparent 41%),#dfe6ea"></div><div class="l" style="left:156px;top:134px;font-size:20px">Lana Steiner</div><div class="l g" style="left:156px;top:163px;font-size:20px">@lanasteiner</div><div class="l g" style="left:485px;top:148px;font-size:20px">1011 points</div><div class="l g" style="left:682px;top:147px;font-size:26px">›</div>
  <div class="l g" style="left:34px;top:253px;font-size:20px">12</div><div class="av" style="left:80px;top:245px;width:58px;height:58px;background:radial-gradient(circle at 50% 45%,#6b4634 0 18%,#1a1410 19% 50%,transparent 51%),#cfcfcf"></div><div class="l" style="left:156px;top:239px;font-size:20px">Demi Wilkinson</div><div class="l g" style="left:156px;top:268px;font-size:20px">@demi_wilkinson</div><div class="l g" style="left:485px;top:253px;font-size:20px">1008 points</div><div class="l g" style="left:682px;top:252px;font-size:26px">›</div>
  <div class="l g" style="left:34px;top:357px;font-size:20px">13</div><div class="av" style="left:80px;top:349px;width:58px;height:58px;background:radial-gradient(circle at 50% 40%,#c99a80 0 16%,#4a3028 17% 30%,transparent 31%),radial-gradient(ellipse at 50% 108%,#f4f4f4 0 40%,transparent 41%),#d9cfe6"></div><div class="l" style="left:156px;top:343px;font-size:20px">Candice Wu</div><div class="l g" style="left:156px;top:372px;font-size:20px">@candicewu</div><div class="l g" style="left:485px;top:357px;font-size:20px">1004 points</div><div class="l g" style="left:682px;top:356px;font-size:26px">›</div>
  <div class="l g" style="left:34px;top:462px;font-size:20px">14</div><div class="av" style="left:80px;top:454px;width:58px;height:58px;background:radial-gradient(circle at 50% 42%,#b57a56 0 18%,#3a2418 19% 40%,transparent 41%),radial-gradient(ellipse at 50% 108%,#a9c6dc 0 40%,transparent 41%),#e8d8b0"></div><div class="l" style="left:156px;top:448px;font-size:20px">Natali Craig</div><div class="l g" style="left:156px;top:477px;font-size:20px">@nat.craig</div><div class="l g" style="left:485px;top:462px;font-size:20px">993 points</div><div class="l g" style="left:682px;top:461px;font-size:26px">›</div>
  <div class="l g" style="left:34px;top:566px;font-size:20px">15</div><div class="av" style="left:80px;top:558px;width:58px;height:58px;background:radial-gradient(circle at 50% 40%,#c49070 0 18%,#3a2a20 19% 28%,transparent 29%),radial-gradient(ellipse at 50% 108%,#3a3028 0 42%,transparent 43%),#dce6d0"></div><div class="l" style="left:156px;top:552px;font-size:20px">Drew Cano</div><div class="l g" style="left:156px;top:581px;font-size:20px">@drewc</div><div class="l g" style="left:485px;top:566px;font-size:20px">987 points</div><div class="l g" style="left:682px;top:565px;font-size:26px">›</div>
 </div>

 <!-- sidebar -->
 <div class="sb" style="width:448px">
  <svg class="a" style="left:29px;top:43px" width="36" height="36" viewBox="0 0 30 30"><use href="#logo"/></svg>
  <div class="l" style="left:72px;top:41px;font-size:36px;color:#4ea6b8">Elevate</div>
  <div class="srch" style="left:34px;top:127px;width:379px;height:62px"><svg class="a" style="left:18px;top:15px" width="28" height="28" viewBox="0 0 24 24" fill="none" stroke="#cecfd2" stroke-width="2"><circle cx="11" cy="11" r="8"/><path d="M21 21l-4.3-4.3"/></svg><span>Search</span></div>
  <svg class="ic" style="left:40px;top:235px" viewBox="0 0 24 24" fill="none" stroke="#cecfd2" stroke-width="2"><circle cx="12" cy="12" r="9"/><circle cx="12" cy="12" r="5"/><circle cx="12" cy="12" r="1"/><path d="M15 9l4-4M17 3v4h4"/></svg>
  <div class="l nav" style="left:91px;top:231px">Goals</div>
  <svg class="ic" style="left:40px;top:301px" viewBox="0 0 24 24" fill="none" stroke="#cecfd2" stroke-width="2"><path d="M8 14a7 7 0 1 1 8 3l-6 2 1-4"/><path d="M3 21v-5a4 4 0 0 1 5-4"/></svg>
  <div class="l nav" style="left:91px;top:297px">Chat</div>
  <svg class="ic" style="left:40px;top:364px" viewBox="0 0 24 24" fill="none" stroke="#cecfd2" stroke-width="2"><path d="M3 4h6a3 3 0 0 1 3 3v14a2 2 0 0 0-2-2H3zM21 4h-6a3 3 0 0 0-3 3v14a2 2 0 0 1 2-2h7z"/></svg>
  <div class="l nav" style="left:91px;top:360px">Journal</div>
  <svg class="ic" style="left:40px;top:426px" viewBox="0 0 24 24" fill="none" stroke="#cecfd2" stroke-width="2"><path d="M2 12h4l3-8 6 16 3-8h4"/></svg>
  <div class="l nav" style="left:91px;top:422px">My Activity</div>
  <svg class="chev" style="left:383px;top:240px" viewBox="0 0 24 24" fill="none" stroke="#cecfd2" stroke-width="2.5"><path d="M6 9l6 6 6-6"/></svg>
  <svg class="chev" style="left:383px;top:306px" viewBox="0 0 24 24" fill="none" stroke="#cecfd2" stroke-width="2.5"><path d="M6 9l6 6 6-6"/></svg>
  <svg class="chev" style="left:383px;top:369px" viewBox="0 0 24 24" fill="none" stroke="#cecfd2" stroke-width="2.5"><path d="M6 9l6 6 6-6"/></svg>
  <svg class="chev" style="left:383px;top:431px" viewBox="0 0 24 24" fill="none" stroke="#cecfd2" stroke-width="2.5"><path d="M6 9l6 6 6-6"/></svg>
  <div class="a" style="left:22px;top:818px;width:404px;height:57px;background:#1f242f;border-radius:10px"></div>
  <svg class="ic" style="left:40px;top:830px" viewBox="0 0 24 24" fill="none" stroke="#cecfd2" stroke-width="2"><path d="M6 17V10a6 6 0 0 1 12 0v7l2 2H4z"/><path d="M10 21h4"/></svg>
  <div class="l nav" style="left:91px;top:826px">Notifications</div>
  <svg class="ic" style="left:40px;top:893px" viewBox="0 0 24 24" fill="none" stroke="#cecfd2" stroke-width="2"><circle cx="12" cy="12" r="3"/><path d="M12 2l2 3 3.5-1 .5 3.5 3 2-2 3 2 3-3 2-.5 3.5-3.5-1-2 3-2-3-3.5 1-.5-3.5-3-2 2-3-2-3 3-2 .5-3.5 3.5 1z"/></svg>
  <div class="l nav" style="left:91px;top:889px">Settings</div>
  <div class="gcard" style="left:20px;top:974px;height:226px;width:404px">
   <div class="l" style="left:22px;top:21px;font-size:20px;font-weight:700;color:#f5f5f6">Goal progress</div>
   <div class="l" style="left:380px;top:14px;font-size:28px;color:#cecfd2">✕</div>
   <div class="a" style="left:22px;top:60px;font-size:19.5px;line-height:29px;color:#cecfd2">You’ve completed 80% of your tasks.<br>Keep working to archieve your goal!</div>
   <div class="a" style="left:22px;top:138px;width:358px;height:11px;border-radius:6px;background:#4a5263"></div>
   <div class="a" style="left:22px;top:138px;width:298px;height:11px;border-radius:6px;background:#f0f1f3"></div>
   <div class="l" style="left:22px;top:164px;font-size:19.5px;font-weight:700;color:#cecfd2">Dismiss</div>
   <div class="l" style="left:117px;top:164px;font-size:19.5px;font-weight:700;color:#f5f5f6">See my tasks</div>
  </div>
  <div class="a" style="left:20px;top:1245px;width:404px;height:2px;background:#333a47"></div>
  <div class="av" style="left:32px;top:1279px;width:57px;height:57px;background:radial-gradient(circle at 50% 38%,#d9b7a2 0 18%,#2b1f1a 19% 28%,transparent 29%),radial-gradient(ellipse at 50% 105%,#eee 0 40%,#b1221e 41% 44%,transparent 45%),#d8d3cc"></div>
  <div class="dot" style="left:72px;top:1318px;border-color:#0c111d"></div>
  <div class="l" style="left:107px;top:1274px;font-size:20px;font-weight:700;color:#f5f5f6">Olivia Rhye</div>
  <div class="l" style="left:107px;top:1303px;font-size:20px;color:#cecfd2">olivia@untitledui.com</div>
  <svg class="a" style="left:383px;top:1292px" width="30" height="30" viewBox="0 0 24 24" fill="none" stroke="#94969c" stroke-width="2"><path d="M9 3H5v18h4M14 12h8M18 8l4 4-4 4"/></svg>
 </div>

 <!-- drawer -->
 <div class="a" style="left:448px;top:0;width:575px;height:1382px;background:#fff;box-shadow:8px 0 24px rgba(16,24,40,.08)">
  <div class="l" style="left:33px;top:33px;font-size:26px;font-weight:700">Notifications</div>
  <div class="l g" style="left:33px;top:76px;font-size:19px">Here’s what you have missed.</div>
  <svg class="a" style="left:510px;top:32px" width="26" height="26" viewBox="0 0 24 24" fill="none" stroke="#98a2b3" stroke-width="2"><path d="M5 5l14 14M19 5L5 19"/></svg>
  <div class="a" style="left:33px;top:147px;width:524px;height:61px;background:#f9fafb;border:2px solid #eaecf0;border-radius:12px"></div>
  <div class="a" style="left:39px;top:152px;width:168px;height:51px;background:#fff;border-radius:10px;box-shadow:0 1px 3px rgba(16,24,40,.12)"></div>
  <div class="l" style="left:64px;top:157px;font-size:19px;font-weight:700;color:#344054">Recent</div>
  <div class="a" style="left:145px;top:164px;width:34px;height:27px;border:2px solid #eaecf0;border-radius:14px;font-size:16px;line-height:23px;text-align:center;color:#344054">2</div>
  <div class="l lg" style="left:258px;top:157px;font-size:19px;font-weight:700">Groups</div>
  <div class="l lg" style="left:436px;top:157px;font-size:19px;font-weight:700">Archive</div>
  <div class="sep" style="left:0;top:230px;width:575px"></div>
  <!-- n1 -->
  <div class="a" style="left:33px;top:268px;width:58px;height:56px;border:2px solid #eaecf0;border-radius:10px"><svg class="a" style="left:15px;top:14px" width="24" height="24" viewBox="0 0 24 24" fill="none" stroke="#344054" stroke-width="2"><rect x="3" y="5" width="18" height="16" rx="2"/><path d="M3 10h18M8 3v4M16 3v4M11 14l1-1v5"/></svg></div>
  <div class="l lg" style="left:518px;top:275px;font-size:22px;font-weight:700">⋮</div>
  <div class="l nt" style="left:33px;top:335px"><b>Your 1-on-1 comes tomorrow!</b> <span class="lg">&nbsp;1 min ago</span></div>
  <div class="a g nt" style="left:33px;top:377px;line-height:29px">Hi! Tomorrow you have a 1-to-1 talk with your<br>coach! Be sure to prepare for a discussion.</div>
  <div class="l g nt" style="left:33px;top:445px;font-weight:700">Remove</div>
  <div class="l blue nt" style="left:135px;top:445px;font-weight:700">Go to Event</div>
  <div class="sep" style="left:33px;top:503px;width:508px"></div>
  <!-- n2 -->
  <div class="av" style="left:33px;top:529px;width:58px;height:56px;background:radial-gradient(circle at 50% 42%,#c8a088 0 16%,#5a3e2a 17% 38%,transparent 39%),radial-gradient(ellipse at 50% 108%,#6a6458 0 40%,transparent 41%),#cdd0d6"></div><div class="dot" style="left:76px;top:570px"></div>
  <div class="l lg" style="left:518px;top:535px;font-size:22px;font-weight:700">⋮</div>
  <div class="l nt" style="left:33px;top:602px"><b>Katherine Moss</b> <span class="lg">&nbsp;2 mins ago</span></div>
  <div class="a g nt" style="left:33px;top:644px;line-height:29px">Thank you for an amazing work! See you later at our<br>1-on-1 😉</div>
  <div class="l g nt" style="left:33px;top:712px;font-weight:700">Remove</div>
  <div class="l blue nt" style="left:135px;top:712px;font-weight:700">Open Chat</div>
  <div class="sep" style="left:33px;top:769px;width:508px"></div>
  <!-- n3 -->
  <div class="a" style="left:33px;top:795px;width:58px;height:56px;border:2px solid #eaecf0;border-radius:10px"><svg class="a" style="left:15px;top:14px" width="24" height="24" viewBox="0 0 24 24" fill="none" stroke="#344054" stroke-width="2"><path d="M7 4h10v5a5 5 0 0 1-10 0zM7 6H3a3 3 0 0 0 4 4M17 6h4a3 3 0 0 1-4 4M12 14v4M8 21h8l-1-3H9z"/></svg></div>
  <div class="l lg" style="left:518px;top:802px;font-size:22px;font-weight:700">⋮</div>
  <div class="l nt" style="left:33px;top:863px"><b>Half-way there!</b> <span class="lg">&nbsp;1 hour ago</span></div>
  <div class="a lg nt" style="left:33px;top:905px;line-height:29px">You’ve completed one of your goals for 50%,<br>well done! Keep up with the good work!</div>
  <div class="l g nt" style="left:33px;top:975px;font-weight:700">Remove</div>
  <div class="l blue nt" style="left:135px;top:975px;font-weight:700">Open Goal 1</div>
  <div class="sep" style="left:33px;top:1033px;width:508px"></div>
  <!-- n4 -->
  <div class="a" style="left:33px;top:1059px;width:58px;height:56px;border:2px solid #eaecf0;border-radius:10px"><svg class="a" style="left:15px;top:14px" width="24" height="24" viewBox="0 0 24 24" fill="none" stroke="#344054" stroke-width="2"><path d="M5 17c2-1 2-4 3-7a5 5 0 0 1 9 2c0 3 1 5 3 6z"/><path d="M10 20h5M12 4V2"/></svg></div>
  <div class="l lg" style="left:518px;top:1066px;font-size:22px;font-weight:700">⋮</div>
  <div class="l nt" style="left:33px;top:1127px"><b>Other people are making progress</b> <span class="lg">&nbsp;1 min ago</span></div>
  <div class="a lg nt" style="left:33px;top:1168px;line-height:30px">Hi, Danial! A lot of your colleagues are moving<br>thorugh their programs and already move up in<br>the <span style="color:#2e6f92;text-decoration:underline">Leaderboards</span>. Be sure to check your own<br>progress and keep up with the rest of the team!</div>
  <div class="l g nt" style="left:33px;top:1299px;font-weight:700">Remove</div>
  <div class="l blue nt" style="left:135px;top:1299px;font-weight:700">Open Leaderboards</div>
  <div class="sep" style="left:33px;top:1357px;width:508px"></div>
 </div>
</div>
</body></html>
